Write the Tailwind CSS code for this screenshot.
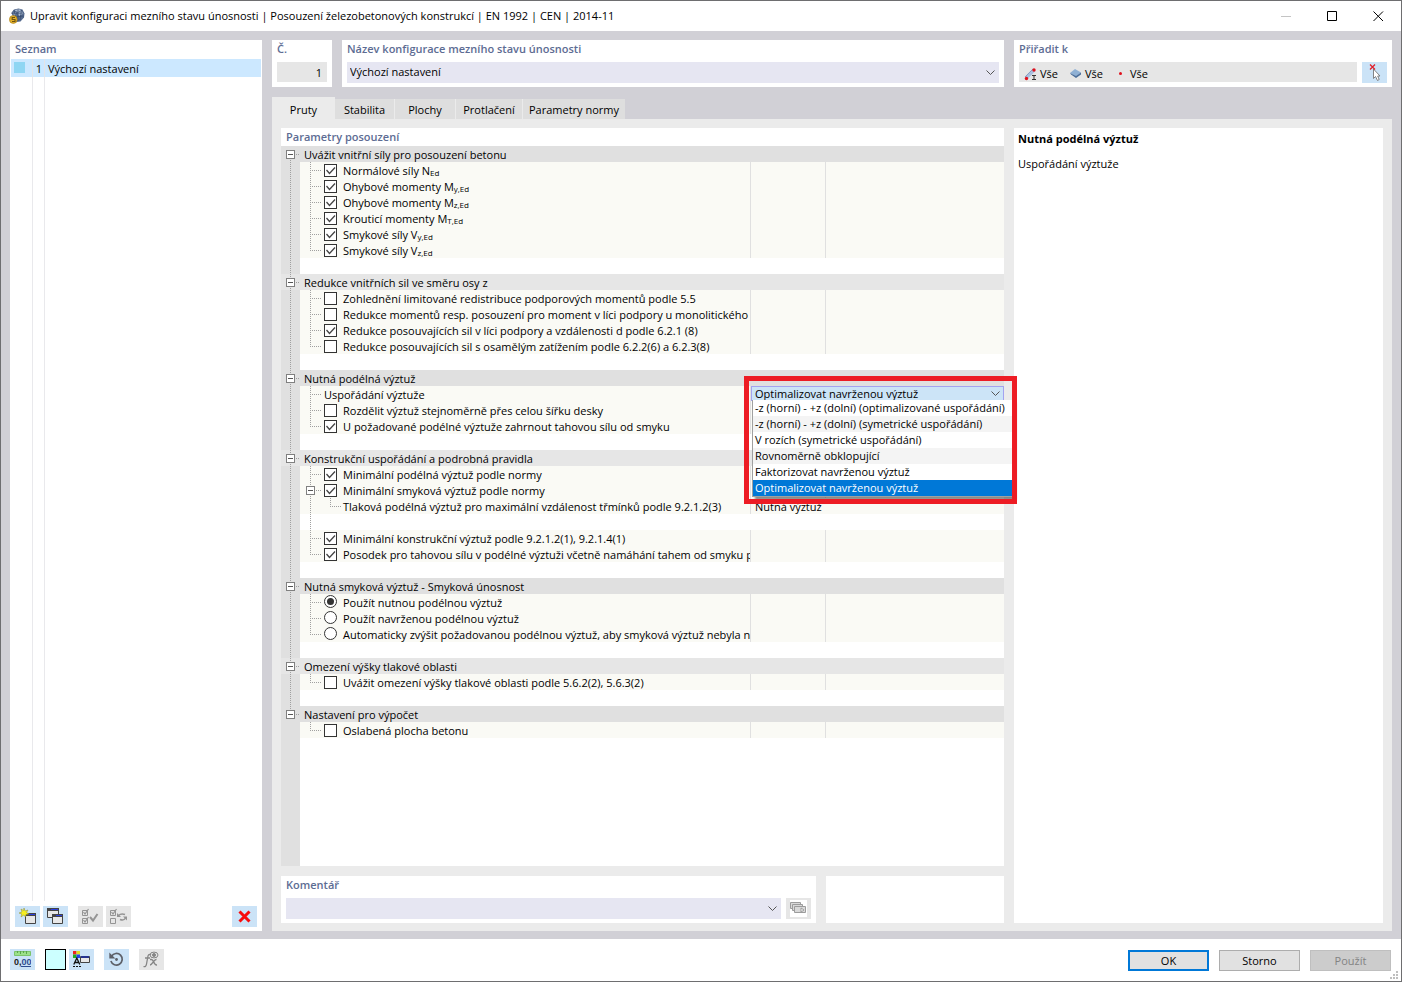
<!DOCTYPE html>
<html lang="cs">
<head>
<meta charset="utf-8">
<meta name="viewport" content="width=device-width, initial-scale=1">
<title>Upravit konfiguraci mezního stavu únosnosti</title>
<script src="https://cdn.jsdelivr.net/npm/@tailwindcss/browser@4"></script>
</head>
<body class="font-['Open_Sans','Noto_Sans',sans-serif] text-[11px] leading-4 text-black">
<div class="flex min-h-screen flex-col border border-[#6e6e70] bg-white">

  <!-- Title bar -->
  <header class="flex h-[30px] shrink-0 items-center pl-2">
    <svg class="size-4 shrink-0" viewBox="0 0 16 16" aria-hidden="true">
      <path d="M2.500 4.500 5 1.500 9.500.5l4 1 2 4-.5 4-3.500 4-4 .5-3-3z" fill="#566b8e"/>
      <path d="M5.500 2.500 9 1l3.500 1L9 4zM3.500 5l3.500-.5L6 8zM8.500 5l4-2 2 2.500L10 8z" fill="#aebfd6"/>
      <path d="M5 2l2.500 11M9 1v12M12.500 2 11 12M2.500 5.500l12-.5M4 9l11-1" stroke="#34486c" stroke-width=".7" fill="none"/>
      <circle cx="4.300" cy="11.500" r="3.900" fill="#e3b02a" stroke="#a47a14" stroke-width=".6"/>
      <path d="M6 9.500H3.200v2H6v2H3" stroke="#6d5310" stroke-width="1.100" fill="none"/>
    </svg>
    <h1 class="ml-[5px] flex-1 truncate">Upravit konfiguraci mezního stavu únosnosti | Posouzení železobetonových konstrukcí | EN 1992 | CEN | 2014-11</h1>
    <div class="flex h-full">
      <button class="grid w-[46px] place-items-center" aria-label="Minimalizovat"><svg class="size-[11px]" viewBox="0 0 11 11"><path d="M0 5.500h10" stroke="#c4c4c4"/></svg></button>
      <button class="grid w-[46px] place-items-center" aria-label="Maximalizovat"><svg class="size-[11px]" viewBox="0 0 11 11"><path d="M.5.5h9v9h-9z" fill="none" stroke="#000"/></svg></button>
      <button class="grid w-[46px] place-items-center" aria-label="Zavřít"><svg class="size-[11px]" viewBox="0 0 11 11"><path d="M.5.5l9.500 9.500M10 .5.5 10" stroke="#000"/></svg></button>
    </div>
  </header>

  <main class="flex flex-1 gap-[10px] bg-[#d1d0d6] pt-[9px] pr-[9px] pb-2 pl-[9px]">

    <!-- Configuration list -->
    <section class="flex w-[252px] shrink-0 flex-col bg-white">
      <h2 class="h-[19px] pl-[5px] leading-[18px] font-semibold text-[#5d6c93]">Seznam</h2>
      <div class="mx-px flex flex-1 flex-col">
        <button class="flex h-[18px] w-full items-start bg-[#cce8ff] text-left">
          <span class="flex w-[22px] self-stretch border-r border-[#e4e4e6] pl-[3px] pt-[3px]"><span class="size-[11px] bg-[#8fd6f3]"></span></span>
          <span class="w-3 self-stretch border-r border-[#e4e4e6] pr-[2px] text-right leading-[20px]">1</span>
          <span class="pl-[3px] leading-[20px]">Výchozí nastavení</span>
        </button>
        <div class="flex flex-1"><span class="w-[22px] border-r border-[#e9e9ec]"></span><span class="w-3 border-r border-[#e9e9ec]"></span></div>
      </div>
      <div class="flex px-[5px] pt-[5px] pb-1">
        <button class="grid h-[21px] w-[25px] place-items-center bg-[#cbe3f7]" aria-label="Nový">
          <svg class="h-[17px] w-[17px]" viewBox="0 0 17 17"><path d="M6.500 5.500h10v10h-10z" fill="#e6e6e6" stroke="#444"/><path d="M6 5h11v3H6z" fill="#444"/><path d="M10 6h6v1h-6z" fill="#2b3fe0"/><path d="M5 0l1 3 3-1-1.500 2.500L10 6 7 6.500 6.500 9 4.800 7 2 9l.800-3L0 5l3-1-1-3 2.500 1.500z" fill="#f5ee20" stroke="#8d8a33" stroke-width=".5"/></svg>
        </button>
        <button class="ml-[3px] grid h-[21px] w-[25px] place-items-center bg-[#cbe3f7]" aria-label="Kopírovat">
          <svg class="h-[17px] w-[17px]" viewBox="0 0 17 17"><path d="M.5.5h11v9H.5z" fill="#e6e6e6" stroke="#444"/><path d="M0 0h12v3H0z" fill="#444"/><path d="M4 1h7v1H4z" fill="#2b3fe0"/><path d="M5.500 6.500h10v9h-10z" fill="#e8e8e8" stroke="#444"/><path d="M5 6h11v3H5z" fill="#444"/><path d="M9 7h6v1H9z" fill="#2b3fe0"/></svg>
        </button>
        <button class="ml-[10px] grid h-[21px] w-[25px] place-items-center bg-[#e6e6e6]" aria-label="Vybrat vše" disabled>
          <svg class="h-[17px] w-[17px]" viewBox="0 0 17 17" fill="none" stroke="#949494"><path d="M.5 2.500h5v5h-5zM.5 10.500h5v5h-5z"/><path d="M1.500 4 3 6 6.500 1M1.500 12 3 14l3.500-5" stroke-width="1.200"/><path d="M8 9l3 3.500L15.500 6" stroke-width="2"/></svg>
        </button>
        <button class="ml-[3px] grid h-[21px] w-[25px] place-items-center bg-[#e6e6e6]" aria-label="Obrátit výběr" disabled>
          <svg class="h-[17px] w-[17px]" viewBox="0 0 17 17" fill="none" stroke="#949494"><path d="M.5 2.500h5v5h-5zM.5 10.500h5v5h-5z"/><path d="M1.500 4 3 6 6.500 1" stroke-width="1.200"/><path d="M8.500 7.500c2-2 4-2 6.500-1M15.500 10c-1 2-3 2.500-5.500 1.500" stroke-width="1.500"/><path d="M7 5v4h4zM17 12.500v-4h-4z" fill="#949494" stroke="none"/></svg>
        </button>
        <button class="ml-auto grid h-[21px] w-[25px] place-items-center bg-[#cbe3f7]" aria-label="Smazat">
          <svg class="size-[13px]" viewBox="0 0 13 13"><path d="M1.500 1.500l10 10M11.500 1.500l-10 10" stroke="#f80c0c" stroke-width="3"/></svg>
        </button>
      </div>
    </section>

    <div class="flex min-w-0 flex-1 flex-col">

      <!-- Number, name and assignment -->
      <div class="flex gap-[10px]">
        <div class="w-[60px] bg-white px-[5px] pb-[5px]">
          <label for="num" class="block h-[22px] leading-[18px] font-semibold text-[#5d6c93]">Č.</label>
          <input id="num" value="1" readonly class="block h-5 w-full bg-[#e6e6e6] pt-px pr-[5px] text-right">
        </div>
        <div class="min-w-0 flex-1 bg-white px-[5px] pb-1">
          <label for="name" class="block h-[22px] leading-[18px] font-semibold text-[#5d6c93]">Název konfigurace mezního stavu únosnosti</label>
          <div class="relative">
            <select id="name" class="block h-[21px] w-full appearance-none bg-[#e6e6f2] pb-px pl-[3px]"><option>Výchozí nastavení</option></select>
            <svg class="pointer-events-none absolute top-[8px] right-[4px] h-[6px] w-[9px]" viewBox="0 0 9 6"><path d="M.5.5l4 4 4-4" fill="none" stroke="#555"/></svg>
          </div>
        </div>
        <div class="w-[378px] bg-white px-[5px] pb-1">
          <h2 class="h-[22px] leading-[18px] font-semibold text-[#5d6c93]">Přiřadit k</h2>
          <div class="flex gap-[5px]">
            <div class="flex h-5 flex-1 items-center bg-[#e6e6e6] pt-[3px] pl-[5px]">
              <svg class="size-[14px]" viewBox="0 0 14 14"><path d="M2 11 10 3" stroke="#a9bfe0" stroke-width="3.500"/><path d="M1 10 9 2" stroke="#7d93b5" stroke-width=".8"/><circle cx="2.500" cy="11.500" r="1.700" fill="#e0101c"/><circle cx="10" cy="3" r="1.700" fill="#e0101c"/><path d="M8 8.500h4M8 12.500h4M10 8.500v4" stroke="#333"/></svg>
              <span class="ml-[2px] w-[18px]">Vše</span>
              <svg class="ml-3 h-[9px] w-3" viewBox="0 0 12 9"><path d="M0 4 5 0l6 3.500-5 4z" fill="#8fb0d4"/><path d="M0 4l6 3 5-3.500v2L6 9 1 5.500z" fill="#4c6f9b"/></svg>
              <span class="ml-[3px] w-[18px]">Vše</span>
              <span class="ml-4 size-[3px] rounded-full bg-[#e0101c]"></span>
              <span class="ml-2">Vše</span>
            </div>
            <button class="grid h-[21px] w-[25px] place-items-center bg-[#cbe3f7]" aria-label="Vybrat objekty">
              <svg class="size-[17px]" viewBox="0 0 17 17"><path d="M7.500 5v9.500l2-2 2 4 1.700-1-1.500-3.500H14z" fill="#fff" stroke="#777" stroke-width=".9"/><path d="M4 .5l5 5M9 .5l-5 5" stroke="#e0202c" stroke-width="1.300"/></svg>
            </button>
          </div>
        </div>
      </div>

      <!-- Tabs -->
      <div role="tablist" class="mt-[10px] flex h-[22px] items-end">
        <button role="tab" aria-selected="true" class="h-[22px] w-[63px] bg-[#ebebeb] pt-1 pb-px">Pruty</button>
        <button role="tab" class="h-5 w-[60px] border-r border-[#ebebeb] bg-[#dedede] pt-[2px]">Stabilita</button>
        <button role="tab" class="h-5 w-[61px] border-r border-[#ebebeb] bg-[#dedede] pt-[2px]">Plochy</button>
        <button role="tab" class="h-5 w-[67px] border-r border-[#ebebeb] bg-[#dedede] pt-[2px]">Protlačení</button>
        <button role="tab" class="h-5 w-[102px] bg-[#dedede] pt-[2px]">Parametry normy</button>
      </div>

      <div role="tabpanel" class="flex flex-1 gap-[10px] bg-[#ebebeb] px-[9px] pt-[9px] pb-2">
        <div class="flex min-w-0 flex-1 flex-col gap-[10px]">
          <section class="flex flex-1 flex-col bg-white">
            <h2 class="h-[18px] pl-[5px] leading-[18px] font-semibold text-[#5d6c93]">Parametry posouzení</h2>
            <div id="tree"></div>
            <div class="w-[19px] flex-1 bg-[#e0e0e0]"></div>
          </section>

          <div class="flex gap-[10px]">
            <div class="flex-1 bg-white px-[5px] pb-1">
              <label for="comment" class="block h-[22px] leading-[18px] font-semibold text-[#5d6c93]">Komentář</label>
              <div class="flex gap-[5px]">
                <div class="relative flex-1">
                  <select id="comment" class="block h-[21px] w-full appearance-none bg-[#e6e6f2]"><option></option></select>
                  <svg class="pointer-events-none absolute top-[8px] right-[4px] h-[6px] w-[9px]" viewBox="0 0 9 6"><path d="M.5.5l4 4 4-4" fill="none" stroke="#555"/></svg>
                </div>
                <button class="grid h-[21px] w-[25px] place-items-center bg-[#e6e6e6]" aria-label="Komentáře" disabled>
                  <svg class="size-[17px] bg-white" viewBox="0 0 17 17" fill="#d9d9d9" stroke="#9c9c9c"><path d="M.5 2.500h10v6H.5z"/><path d="M2.500 4.500h10v6h-10z"/><path d="M4.500 6.500h11v6h-11z"/><path d="M11 8v4l3-2z" fill="#fff"/></svg>
                </button>
              </div>
            </div>
            <div class="w-[178px] bg-white"></div>
          </div>
        </div>

        <aside class="w-[369px] shrink-0 bg-white px-1 pt-[3px]">
          <h2 class="font-bold">Nutná podélná výztuž</h2>
          <p class="mt-[9px]">Uspořádání výztuže</p>
        </aside>
      </div>
    </div>
  </main>

  <!-- Bottom bar -->
  <footer class="relative flex h-[42px] shrink-0 items-start pt-[10px] pr-[10px] pl-[9px]">
    <button class="grid h-[21px] w-[25px] place-items-center bg-[#cbe3f7]" aria-label="Jednotky a desetinná místa">
      <svg class="h-[17px] w-[17px]" viewBox="0 0 17 17"><path d="M.5.5h16v4H.5z" fill="#9be08a" stroke="#7cc46b"/><path d="M3.500 0v2M6.500 0v3M9.500 0v2M12.500 0v3" stroke="#5aa64b"/><text x="0" y="14" font-family="Liberation Sans" font-size="9" font-weight="700" fill="#222">0,<tspan fill="#2d4c91">00</tspan></text><path d="M7 15.500h10" stroke="#2d4c91"/></svg>
    </button>
    <button class="ml-[10px] size-[21px] border border-black bg-[#ccffff]" aria-label="Barva"></button>
    <button class="ml-[3px] grid h-[21px] w-[25px] place-items-center bg-[#cbe3f7]" aria-label="Zobrazení">
      <svg class="h-[17px] w-[17px]" viewBox="0 0 17 17"><path d="M0 0h3.500v3.500H0z" fill="#e22"/><path d="M3.500 0H7v3.500H3.500z" fill="#dd2"/><path d="M0 3.500h3.500V7H0z" fill="#2a2"/><path d="M3.500 3.500H7V7H3.500z" fill="#24e"/><path d="M.8 13.500 3.800 7l3 6.500M2 11.500h4" fill="none" stroke="#111" stroke-width="1.300"/><path d="M0 15.500h8" stroke="#111" stroke-dasharray="2 1"/><path d="M7.500 5.500h9v6h-9z" fill="#e8e8e8" stroke="#444"/><path d="M8 5h8v2H8z" fill="#25338f"/></svg>
    </button>
    <button class="ml-[10px] grid h-[21px] w-[25px] place-items-center bg-[#cbe3f7]" aria-label="Obnovit">
      <svg class="size-[15px]" viewBox="0 0 15 15"><path d="M2.500 4.200A5.800 5.800 0 1 1 1.900 9" fill="none" stroke="#5d6068" stroke-width="1.700"/><path d="M.3.500v6h6z" fill="#5d6068"/><circle cx="7.500" cy="7.500" r="1.400" fill="#5d6068"/></svg>
    </button>
    <button class="ml-[10px] grid h-[21px] w-[25px] place-items-center bg-[#e6e6e6]" aria-label="Vzorec" disabled>
      <svg class="size-[17px]" viewBox="0 0 17 17" fill="none" stroke="#858585"><path d="M8 4C6 2.500 5 4 4.700 6.500L3.500 13c-.4 2.500-1.500 3-3 2.500M2 7h5" stroke-width="1.300"/><path d="M7 8.500h1.500c2.500 0 2 6 5.500 5.500M13.500 8.500c-2.500-.5-4 5.500-6.500 5.500" stroke-width="1.400"/><ellipse cx="11" cy="4" rx="4" ry="2.900"/><circle cx="11" cy="4" r="1.500" fill="#858585"/></svg>
    </button>
    <div class="mt-px ml-auto flex gap-[10px]">
      <button class="h-[21px] w-[81px] border-2 border-[#0078d7] bg-[#e1e1e1]">OK</button>
      <button class="h-[21px] w-[81px] border border-[#adadad] bg-[#e1e1e1]">Storno</button>
      <button class="h-[21px] w-[81px] border border-[#bfbfbf] bg-[#cccccc] text-[#838383]" disabled>Použít</button>
    </div>
    <svg class="absolute right-[3px] bottom-[2px] size-2" viewBox="0 0 8 8" fill="#bfbfbf"><path d="M6 0h2v2H6zM6 3h2v2H6zM6 6h2v2H6zM3 3h2v2H3zM3 6h2v2H3zM0 6h2v2H0z"/></svg>
  </footer>
</div>

<script>
// h: section header, c: check box, r: radio, t: plain text, g: gap
// last: end of its branch, box: collapsible item, sub: second level
const rows = [
  {k:'h', t:'Uvážit vnitřní síly pro posouzení betonu', first:1},
  {k:'c', on:1, t:'Normálové síly N', s:'Ed'},
  {k:'c', on:1, t:'Ohybové momenty M', s:'y,Ed'},
  {k:'c', on:1, t:'Ohybové momenty M', s:'z,Ed'},
  {k:'c', on:1, t:'Krouticí momenty M', s:'T,Ed'},
  {k:'c', on:1, t:'Smykové síly V', s:'y,Ed'},
  {k:'c', on:1, t:'Smykové síly V', s:'z,Ed', last:1},
  {k:'g'},
  {k:'h', t:'Redukce vnitřních sil ve směru osy z', alt:1},
  {k:'c', t:'Zohlednění limitované redistribuce podporových momentů podle 5.5'},
  {k:'c', t:'Redukce momentů resp. posouzení pro moment v líci podpory u monolitického'},
  {k:'c', on:1, t:'Redukce posouvajících sil v líci podpory a vzdálenosti d podle 6.2.1 (8)'},
  {k:'c', t:'Redukce posouvajících sil s osamělým zatížením podle 6.2.2(6) a 6.2.3(8)', last:1},
  {k:'g'},
  {k:'h', t:'Nutná podélná výztuž'},
  {k:'t', t:'Uspořádání výztuže', menu:1},
  {k:'c', t:'Rozdělit výztuž stejnoměrně přes celou šířku desky'},
  {k:'c', on:1, t:'U požadované podélné výztuže zahrnout tahovou sílu od smyku', last:1},
  {k:'g'},
  {k:'h', t:'Konstrukční uspořádání a podrobná pravidla', alt:1},
  {k:'c', on:1, t:'Minimální podélná výztuž podle normy'},
  {k:'c', on:1, t:'Minimální smyková výztuž podle normy', box:1},
  {k:'t', t:'Tlaková podélná výztuž pro maximální vzdálenost třmínků podle 9.2.1.2(3)', sub:1, v:'Nutná výztuž'},
  {k:'g', line:1},
  {k:'c', on:1, t:'Minimální konstrukční výztuž podle 9.2.1.2(1), 9.2.1.4(1)'},
  {k:'c', on:1, t:'Posodek pro tahovou sílu v podélné výztuži včetně namáhání tahem od smyku podle', last:1},
  {k:'g'},
  {k:'h', t:'Nutná smyková výztuž - Smyková únosnost'},
  {k:'r', on:1, t:'Použít nutnou podélnou výztuž'},
  {k:'r', t:'Použít navrženou podélnou výztuž'},
  {k:'r', t:'Automaticky zvýšit požadovanou podélnou výztuž, aby smyková výztuž nebyla nutná', last:1},
  {k:'g'},
  {k:'h', t:'Omezení výšky tlakové oblasti', alt:1},
  {k:'c', t:'Uvážit omezení výšky tlakové oblasti podle 5.6.2(2), 5.6.3(2)', last:1},
  {k:'g'},
  {k:'h', t:'Nastavení pro výpočet', end:1},
  {k:'c', t:'Oslabená plocha betonu', last:1, after:1},
];
const options = ['-z (horní) - +z (dolní) (optimalizované uspořádání)', '-z (horní) - +z (dolní) (symetrické uspořádání)',
  'V rozích (symetrické uspořádání)', 'Rovnoměrně obklopující', 'Faktorizovat navrženou výztuž', 'Optimalizovat navrženou výztuž'];

const dots = (w, d) => `<svg class="${w} h-4 shrink-0" viewBox="0 0 ${w === 'w-[19px]' ? 19 : w === 'w-6' ? 24 : 43} 16" fill="none" stroke="#a0a0a0" stroke-dasharray="1 1" shape-rendering="crispEdges"><path d="${d}"/></svg>`;
const toggle = pos => `<button class="absolute ${pos} size-[9px] border border-[#808080] bg-white" aria-label="Sbalit"><span class="mx-auto block h-px w-[5px] bg-[#555]"></span></button>`;

function branch(r) {
  if (r.sub) return dots('w-[43px]', 'M10.5 0V16M30.5 0V8M30 8.5h12');
  return dots('w-6', r.box ? 'M10.5 0V16M16 8.5h5' : r.last ? 'M10.5 0V8M10 8.5h11' : 'M10.5 0V16M12 8.5h9');
}
function field(r, i) {
  const label = r.t + (r.s ? `<span class="relative top-px text-[8px] leading-none">${r.s}</span>` : '');
  if (r.k === 't') return `<span id="l${i}" class="whitespace-nowrap">${label}</span>`;
  const input = r.k === 'c'
    ? `<input type="checkbox" id="f${i}" ${r.on ? 'checked' : ''} class="peer block size-[13px] appearance-none border border-[#333] bg-white"><svg class="pointer-events-none absolute inset-0 hidden size-[13px] peer-checked:block" viewBox="0 0 13 13"><path d="M2.500 6l3 3.500L11 3.500" fill="none" stroke="#444" stroke-width="1.300"/></svg>`
    : `<input type="radio" name="shear" id="f${i}" ${r.on ? 'checked' : ''} class="peer block size-[13px] appearance-none rounded-full border border-[#333] bg-white"><span class="pointer-events-none absolute inset-[3px] hidden rounded-full bg-[#333] peer-checked:block"></span>`;
  return `<span class="relative ${r.k === 'r' ? 'mt-px' : 'mt-[2px]'} size-[13px] shrink-0">${input}</span><label for="f${i}" class="ml-[6px] whitespace-nowrap">${label}</label>`;
}
function value(r, i) {
  if (r.menu) return `<div class="relative flex-1 border-l border-[#e0e0e0]">
    <select aria-labelledby="l${i}" class="block h-[15px] w-full appearance-none border border-b-0 border-[#a3a3f0] bg-[#cce4f7] pb-px pl-[3px] leading-[14px]"><option>Optimalizovat navrženou výztuž</option></select>
    <svg class="pointer-events-none absolute top-[5px] right-1 h-[6px] w-[9px]" viewBox="0 0 9 6"><path d="M.5.5l4 4 4-4" fill="none" stroke="#555"/></svg>
    <ul role="listbox" class="absolute top-[14px] left-px z-10 w-[261px] border-b border-l border-[#a0a0a0] bg-white shadow-[3px_3px_2px_#00000070]">${options.map((o, n) =>
      `<li role="option" aria-selected="${n === 5}" class="h-4 pl-[2px] whitespace-nowrap ${n === 5 ? 'bg-[#0078d7] text-white' : n % 2 ? 'bg-[#f4f4f4]' : 'bg-white'}">${o}</li>`).join('')}</ul>
    <div class="pointer-events-none absolute -top-[10px] -left-[7px] z-20 h-[128px] w-[273px] border-5 border-[#ed1c24]"></div>
  </div>`;
  if (r.v) return `<div class="flex-1 border-l border-[#e0e0e0] pl-1 leading-[18px]">${r.v}</div>`;
  return '<div class="w-[75px] border-l border-[#e0e0e0]"></div><div class="flex-1 border-l border-[#e0e0e0]"></div>';
}
document.getElementById('tree').innerHTML = rows.map((r, i) => {
  if (r.k === 'h') return `<h3 class="flex h-4 ${r.alt ? 'bg-[#e6e6e6]' : 'bg-[#e0e0e0]'}"><span class="relative flex">${dots('w-[19px]', (r.first ? '' : 'M9.5 0V4') + (r.end ? '' : 'M9.5 14V16') + 'M15 8.5h4')}${toggle('top-1 left-[5px] grid place-items-center')}</span><span class="pl-1 leading-[18px]">${r.t}</span></h3>`;
  const gutter = `<div class="w-[19px] shrink-0 bg-[#e0e0e0]">${r.after ? '' : dots('w-[19px]', 'M9.5 0V16')}</div>`;
  if (r.k === 'g') return `<div class="flex h-4">${gutter}${r.line ? dots('w-6', 'M10.5 0V16') : ''}</div>`;
  return `<div class="flex h-4">${gutter}<div class="flex min-w-0 flex-1 bg-[#fafaf5]"><div class="relative flex w-[450px] shrink-0 overflow-x-clip leading-[18px]">${branch(r)}${r.box ? toggle('top-1 left-[6px] grid place-items-center') : ''}${field(r, i)}</div>${value(r, i)}</div></div>`;
}).join('');
</script>
</body>
</html>
